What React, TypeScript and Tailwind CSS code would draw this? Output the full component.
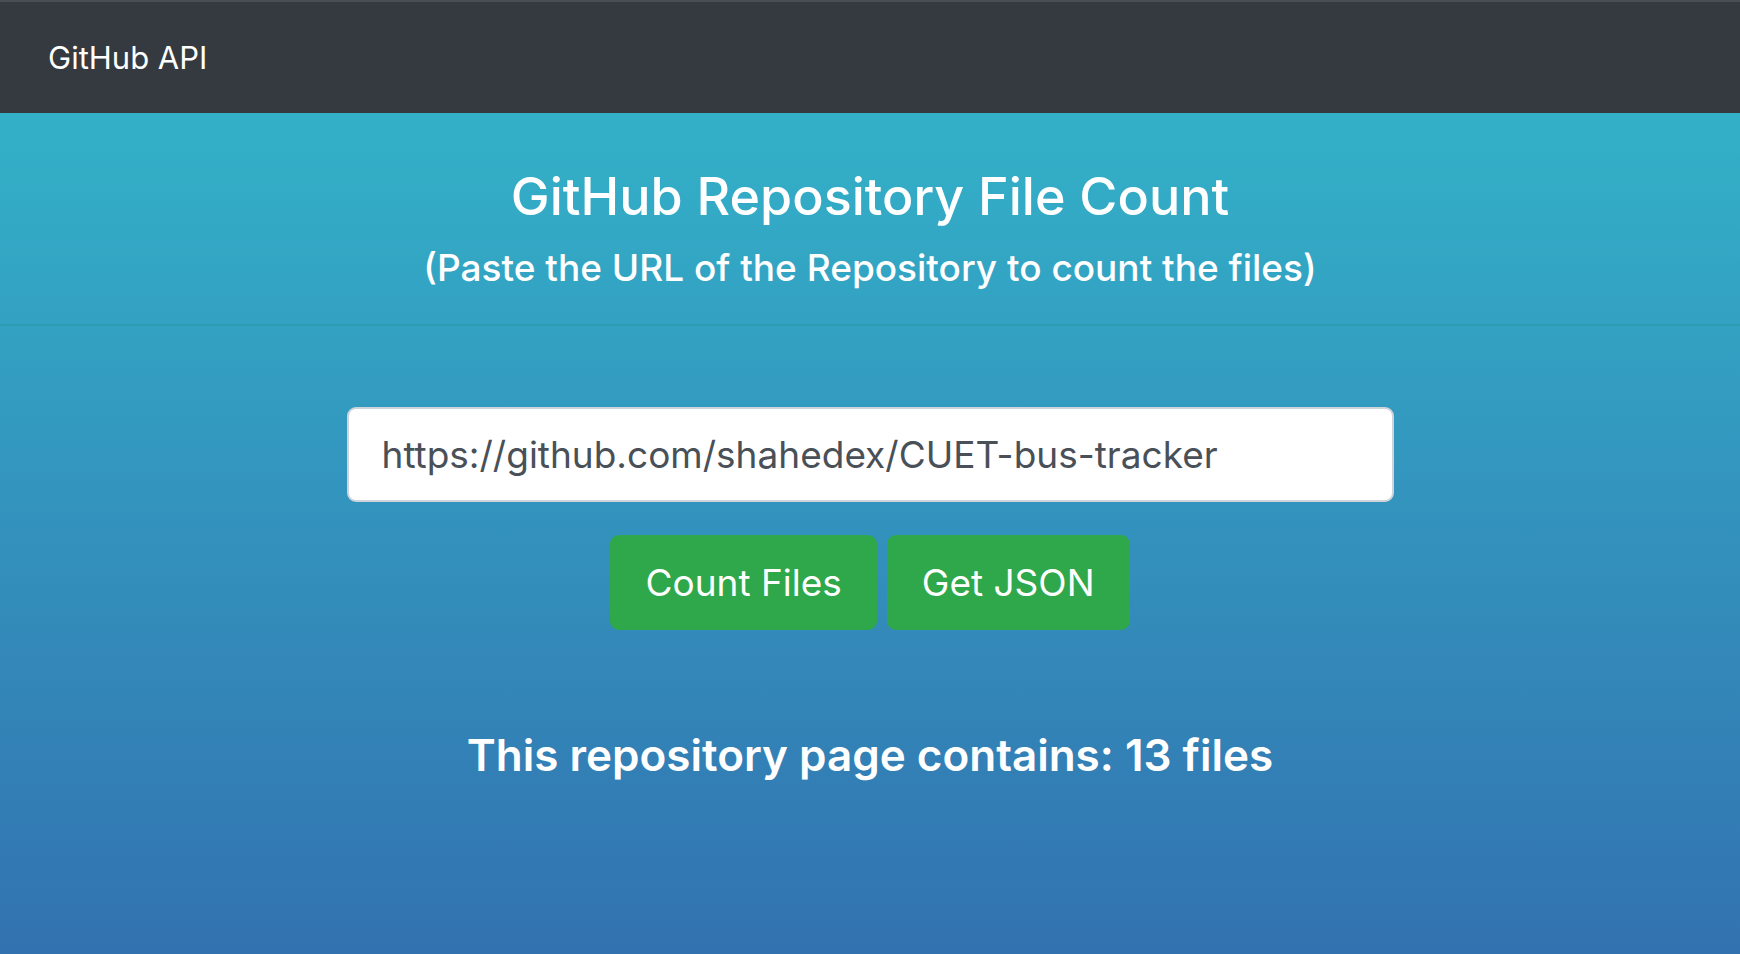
export default function App() {
  const url = "https://github.com/shahedex/CUET-bus-tracker";

  return (
    <div className="min-h-screen flex flex-col font-['Inter',sans-serif]">
      {/* Navbar */}
      <nav className="h-[113px] bg-[#343a40] border-t-2 border-[#4a4e53] flex items-center pl-[48px]">
        <span className="text-white text-[31px] leading-none">GitHub API</span>
      </nav>

      <main className="flex-1 bg-linear-to-b from-[#33b1c8] to-[#3272b0] text-white">
        {/* Header */}
        <div className="text-center pt-[53px] pb-[34px] border-b-2 border-[#2c9bb4]">
          <h1 className="text-[52px] leading-[62px] font-medium">
            GitHub Repository File Count
          </h1>
          <h2 className="mt-[18px] text-[37px] leading-[44px] font-medium">
            (Paste the URL of the Repository to count the files)
          </h2>
        </div>

        {/* Form */}
        <div className="w-[1047px] mx-auto mt-[81px]">
          <input
            type="text"
            defaultValue={url}
            className="w-full h-[95px] bg-white border-2 border-[#ced4da] rounded-[9px] px-[33px] text-[37px] text-[#495057] outline-none"
          />
        </div>

        <div className="flex justify-center gap-[10px] mt-[33px]">
          <button className="h-[95px] px-[35px] bg-[#2fa84b] rounded-[9px] text-[37px] text-white">
            Count Files
          </button>
          <button className="h-[95px] px-[35px] bg-[#2fa84b] rounded-[9px] text-[37px] text-white">
            Get JSON
          </button>
        </div>

        {/* Result */}
        <p className="mt-[99px] text-center text-[44px] leading-[53px] font-semibold">
          This repository page contains: 13 files
        </p>
      </main>
    </div>
  );
}
